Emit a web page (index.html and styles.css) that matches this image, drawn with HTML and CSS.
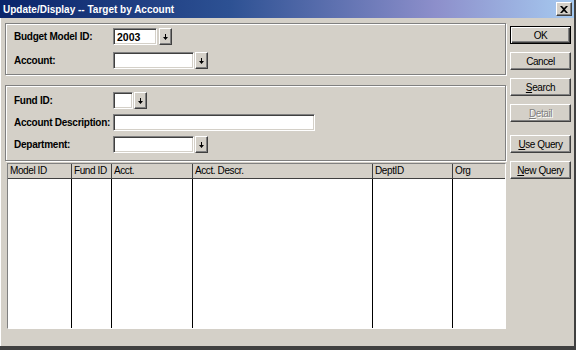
FILE: index.html
```html
<!DOCTYPE html>
<html>
	<head>
		<meta charset="utf-8">
		<title>Update/Display -- Target by Account</title>
		<link rel="stylesheet" href="styles.css">
	</head>
	<body>
		<div class="window">
			<div class="titlebar">
				<span class="title">Update/Display -- Target by Account</span>
				<span class="close">
					<svg width="8" height="7" viewBox="0 0 8 7"><path d="M0 0h2l2 2 2-2h2L5 3.5 8 7H6L4 5 2 7H0l3-3.5z" fill="#000"/></svg>
				</span>
			</div>
			<div class="content">
				<div class="main">
					<div class="group group-top">
						<div class="row">
							<label class="label">Budget Model ID:</label>
							<div class="field w-model">2003</div>
							<span class="drop gap2"><svg width="5" height="6" viewBox="0 0 5 6"><path d="M2 0h1v3h2L2.5 6 0 3h2z" fill="#000"/></svg></span>
						</div>
						<div class="row">
							<label class="label">Account:</label>
							<div class="field w-wide"></div>
							<span class="drop"><svg width="5" height="6" viewBox="0 0 5 6"><path d="M2 0h1v3h2L2.5 6 0 3h2z" fill="#000"/></svg></span>
						</div>
					</div>
					<div class="group group-mid">
						<div class="row">
							<label class="label">Fund ID:</label>
							<div class="field w-fund"></div>
							<span class="drop"><svg width="5" height="6" viewBox="0 0 5 6"><path d="M2 0h1v3h2L2.5 6 0 3h2z" fill="#000"/></svg></span>
						</div>
						<div class="row">
							<label class="label">Account Description:</label>
							<div class="field w-descr"></div>
						</div>
						<div class="row">
							<label class="label">Department:</label>
							<div class="field w-wide"></div>
							<span class="drop"><svg width="5" height="6" viewBox="0 0 5 6"><path d="M2 0h1v3h2L2.5 6 0 3h2z" fill="#000"/></svg></span>
						</div>
					</div>
					<div class="list">
						<div class="head first">Model ID</div>
						<div class="head">Fund ID</div>
						<div class="head">Acct.</div>
						<div class="head">Acct. Descr.</div>
						<div class="head">DeptID</div>
						<div class="head">Org</div>
						<div class="cell first"></div>
						<div class="cell"></div>
						<div class="cell"></div>
						<div class="cell"></div>
						<div class="cell"></div>
						<div class="cell"></div>
					</div>
				</div>
				<div class="buttons">
					<button class="btn default">OK</button>
					<button class="btn">Cancel</button>
					<button class="btn"><u>S</u>earch</button>
					<button class="btn disabled"><u>D</u>etail</button>
					<button class="btn spaced"><u>U</u>se Query</button>
					<button class="btn"><u>N</u>ew Query</button>
				</div>
			</div>
		</div>
	</body>
</html>
```

FILE: styles.css
```css
* {
	margin: 0;
	padding: 0;
	box-sizing: border-box;
}
body {
	font-family: "Liberation Sans", Arial, sans-serif;
	font-size: 11px;
	color: #000;
	background: #d4d0c8;
}
.window {
	width: 576px;
	height: 350px;
	background: #d4d0c8;
	border-right: 2px solid #404040;
	border-bottom: 4px solid #404040;
	box-shadow: inset 1px 0 0 #fff;
}
.titlebar {
	height: 18px;
	display: flex;
	align-items: center;
	justify-content: space-between;
	padding: 0 2px 0 3px;
	background: linear-gradient(to right, #0a246a 0%, #2d5193 40%, #8d8fcb 76%, #a6caf0 100%);
}
.title {
	color: #fff;
	font-weight: bold;
	font-size: 10px;
}
.close {
	width: 16px;
	height: 14px;
	display: flex;
	align-items: center;
	justify-content: center;
	background: #d4d0c8;
	border: 1px solid;
	border-color: #fff #404040 #404040 #fff;
	box-shadow: inset -1px -1px 0 #808080;
}
.content {
	display: flex;
	padding: 5px 0 0 5px;
}
.main {
	width: 501px;
}
.group {
	border: 1px solid #808080;
	box-shadow: inset 1px 1px 0 #fff, 1px 1px 0 #fff;
	padding-left: 8px;
	display: flex;
	flex-direction: column;
}
.group-top {
	height: 52px;
	padding-top: 4px;
	gap: 7px;
}
.group-mid {
	height: 76px;
	margin-top: 10px;
	padding-top: 6px;
	gap: 5px;
}
.row {
	display: flex;
	align-items: center;
	height: 17px;
}
.label {
	width: 99px;
	font-weight: bold;
	font-size: 10px;
	letter-spacing: -0.25px;
	white-space: nowrap;
}
.field {
	height: 17px;
	background: #fff;
	border: 1px solid;
	border-color: #808080 #fff #fff #808080;
	box-shadow: inset 1px 1px 0 #404040, inset -1px -1px 0 #d4d0c8;
	padding: 1px 0 0 3px;
	font-weight: bold;
	font-size: 10.5px;
	line-height: 14px;
}
.w-model {
	width: 44px;
}
.w-wide {
	width: 81px;
}
.w-fund {
	width: 20px;
}
.w-descr {
	width: 202px;
}
.drop {
	width: 13px;
	height: 17px;
	margin-left: 1px;
	display: flex;
	align-items: center;
	justify-content: center;
	background: #d4d0c8;
	border: 1px solid;
	border-color: #fff #404040 #404040 #fff;
	box-shadow: inset -1px -1px 0 #808080;
}
.drop.gap2 {
	margin-left: 2px;
}
.list {
	margin: 2px 0 0 2px;
	width: 499px;
	height: 166px;
	display: grid;
	grid-template-columns: 63px 40px 81px 180px 80px 53px;
	grid-template-rows: 15px 1fr;
	border: 1px solid;
	border-color: #808080 #fff #fff #808080;
}
.head {
	background: #d4d0c8;
	border-left: 1px solid #404040;
	border-bottom: 1px solid #404040;
	padding-left: 2px;
	line-height: 14px;
	font-size: 10px;
	letter-spacing: -0.4px;
	white-space: nowrap;
	overflow: hidden;
}
.head.first {
	border-left: none;
}
.cell {
	background: #fff;
	border-left: 1px solid #000;
}
.cell.first {
	border-left: none;
}
.buttons {
	width: 61px;
	margin-left: 4px;
	padding-top: 3px;
	display: flex;
	flex-direction: column;
	gap: 8px;
}
.btn {
	height: 18px;
	width: 61px;
	font-family: "Liberation Sans", Arial, sans-serif;
	font-size: 10px;
	letter-spacing: -0.4px;
	color: #000;
	background: #d4d0c8;
	border: 1px solid;
	border-color: #fff #404040 #404040 #fff;
	box-shadow: inset -1px -1px 0 #808080;
}
.btn.default {
	border: 1px solid #000;
	box-shadow: inset 1px 1px 0 #fff, inset -1px -1px 0 #404040, inset -2px -2px 0 #808080;
}
.btn.disabled {
	color: #808080;
	text-shadow: 1px 1px 0 #fff;
}
.btn.spaced {
	margin-top: 5px;
}
```
